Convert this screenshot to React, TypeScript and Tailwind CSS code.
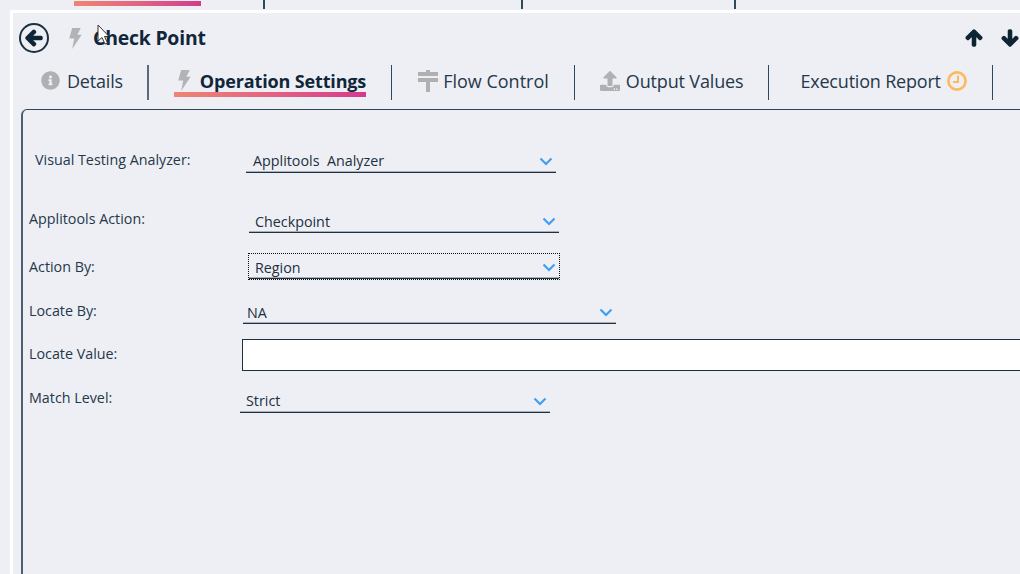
import { FaArrowLeft, FaArrowUp, FaArrowDown, FaInfoCircle, FaUpload } from "react-icons/fa";

const font = "font-['Open_Sans','Noto_Sans',sans-serif]";

function Bolt({ className }: { className: string }) {
  return (
    <svg viewBox="0 0 14 22" className={className}>
      <path d="M4 0h9L9.5 7H14L4 22l2.2-11H1z" fill="#b3b3b5" />
    </svg>
  );
}

function SignIcon() {
  return (
    <svg viewBox="0 0 20 22" className="ml-[26px] w-[20px] h-[22px]">
      <path d="M8 0h4v2h8v4H0V2h8zM0 8h20v4h-8v10H8V12H0z" fill="#b0b0b2" />
    </svg>
  );
}

function ClockIcon() {
  return (
    <svg viewBox="0 0 20 20" className="ml-[6px] w-[20px] h-[20px]">
      <circle cx="10" cy="10" r="8.6" fill="none" stroke="#fdb95e" strokeWidth="2.6" />
      <path d="M11 4.5V11H6" fill="none" stroke="#fdb95e" strokeWidth="2" />
    </svg>
  );
}

function Cursor() {
  return (
    <svg viewBox="0 0 14 22" className="absolute left-[97px] top-[24px] w-[14px] h-[22px]">
      <path d="M1 1v16l4-3.5 3 6.5 2.5-1-3-6.5H12z" fill="#fff" stroke="#333" strokeWidth="1" />
    </svg>
  );
}

function Divider({ className }: { className: string }) {
  return <div className={`h-[35px] self-start shrink-0 ${className}`} />;
}

function Select({
  value,
  width,
  textClass,
  focused,
}: {
  value: string;
  width: string;
  textClass: string;
  focused?: boolean;
}) {
  return (
    <div
      className={`flex items-end justify-between border-b border-[#1c3040] shadow-[inset_0_-1px_0_0_#a9b0b8] ${width} ${
        focused ? "h-[25px] outline-dotted outline-1 outline-[#111]" : "h-[24px]"
      }`}
    >
      <span className={`text-[14.3px] leading-[20px] text-[#1c3040] whitespace-pre ${textClass}`}>{value}</span>
      <svg viewBox="0 0 14 9" className="w-[14px] h-[9px] mr-[3px] mb-[6px]">
        <path d="M1.5 1.5L7 7l5.5-5.5" fill="none" stroke="#3f9ff5" strokeWidth="2.2" />
      </svg>
    </div>
  );
}

export default function App() {
  return (
    <div className={`relative h-[574px] w-[1020px] overflow-hidden bg-[#eeeff5] text-[#1c3040] ${font}`}>
      {/* strip of the outer tabs */}
      <div className="flex h-[10px]">
        <div className="w-[74px]" />
        <div className="w-[127px] h-[5px] mt-[1px] bg-gradient-to-r from-[#ee8572] to-[#d43a8c]" />
        <div className="w-[62px]" />
        <div className="w-[2px] h-[9px] bg-[#33475a]" />
        <div className="w-[256px]" />
        <div className="w-[2px] h-[9px] bg-[#33475a]" />
        <div className="w-[211px]" />
        <div className="w-[2px] h-[9px] bg-[#33475a]" />
      </div>

      <div className="ml-[10px] h-[564px] border-l-[3px] border-t-[3px] border-white">
        {/* title row */}
        <div className="flex items-center h-[50px] pl-[6px]">
          <div className="w-[30px] h-[30px] rounded-full border-2 border-[#1c3040] flex items-center justify-center">
            <FaArrowLeft className="w-[18px] h-[18px] text-[#0f2536]" stroke="currentColor" strokeWidth={50} />
          </div>
          <Bolt className="w-[14px] h-[21px] ml-[19px]" />
          <span className="ml-[11px] text-[19.4px] font-bold leading-none tracking-[-0.2px] text-[#10263a]">Check Point</span>
          <FaArrowUp className="ml-auto w-[18px] h-[18px] text-[#0f2536]" stroke="currentColor" strokeWidth={50} />
          <FaArrowDown className="ml-[18px] mr-[1px] w-[18px] h-[18px] text-[#0f2536]" stroke="currentColor" strokeWidth={50} />
        </div>

        {/* tab row */}
        <div className="flex items-center h-[35px] mt-[2px] pb-[4px] text-[18px] leading-none text-[#24384a]">
          <FaInfoCircle className="ml-[28px] w-[19px] h-[19px] text-[#b0b0b2]" />
          <span className="ml-[7px] tracking-[-0.2px]">Details</span>
          <Divider className="ml-[24px] w-[2px] bg-[#5a6c7c]" />
          <div className="relative flex items-center self-start ml-[25px] h-[35px] pb-[4px]">
            <Bolt className="w-[14px] h-[21px] ml-[3px]" />
            <span className="ml-[9px] font-bold text-[18px] tracking-[-0.15px] text-[#10263a]">Operation Settings</span>
            <div className="absolute left-0 right-0 bottom-[3px] h-[5px] bg-gradient-to-r from-[#ee8572] to-[#d43a8c]" />
          </div>
          <Divider className="ml-[25px] w-[1px] bg-[#33475a]" />
          <SignIcon />
          <span className="ml-[5px]">Flow Control</span>
          <Divider className="ml-[25px] w-[1px] bg-[#33475a]" />
          <FaUpload className="ml-[25px] w-[20px] h-[20px] text-[#b0b0b2]" />
          <span className="ml-[6px] tracking-[-0.15px]">Output Values</span>
          <Divider className="ml-[25px] w-[1px] bg-[#33475a]" />
          <span className="ml-[31px] tracking-[-0.2px]">Execution Report</span>
          <ClockIcon />
          <Divider className="ml-[25px] w-[1px] bg-[#33475a]" />
        </div>

        {/* form panel */}
        <div className="ml-[8px] mt-[9px] h-[470px] pt-[39px] border-l-2 border-t border-l-[#4f6070] border-t-[#33475a] rounded-tl-[6px] text-[14.3px] leading-[20px] text-[#24384a]">
          <div className="flex items-end h-[24px] pl-[12px]">
            <span className="w-[211px] mb-[3px]">Visual Testing Analyzer:</span>
            <Select value="Applitools  Analyzer" width="w-[310px]" textClass="pl-[7px] mb-[1px]" />
          </div>
          <div className="flex items-end h-[24px] pl-[6px] mt-[36px]">
            <span className="w-[220px] mb-[4px]">Applitools Action:</span>
            <Select value="Checkpoint" width="w-[310px]" textClass="pl-[6px]" />
          </div>
          <div className="flex items-end h-[24px] pl-[6px] mt-[22px]">
            <span className="w-[220px] mb-[2px]">Action By:</span>
            <Select value="Region" width="w-[310px]" textClass="pl-[6px]" focused />
          </div>
          <div className="flex items-end h-[24px] pl-[6px] mt-[21px]">
            <span className="w-[214px] mb-[3px]">Locate By:</span>
            <Select value="NA" width="w-[373px]" textClass="pl-[4px]" />
          </div>
          <div className="flex items-center h-[32px] pl-[6px] mt-[15px]">
            <span className="w-[213px] mb-[3px]">Locate Value:</span>
            <div className="flex-1 h-[32px] bg-white border border-[#1c3040] border-r-0" />
          </div>
          <div className="flex items-end h-[24px] pl-[6px] mt-[18px]">
            <span className="w-[211px] mb-[5px]">Match Level:</span>
            <Select value="Strict" width="w-[310px]" textClass="pl-[6px] mb-[1px]" />
          </div>
        </div>
      </div>

      <Cursor />
    </div>
  );
}
